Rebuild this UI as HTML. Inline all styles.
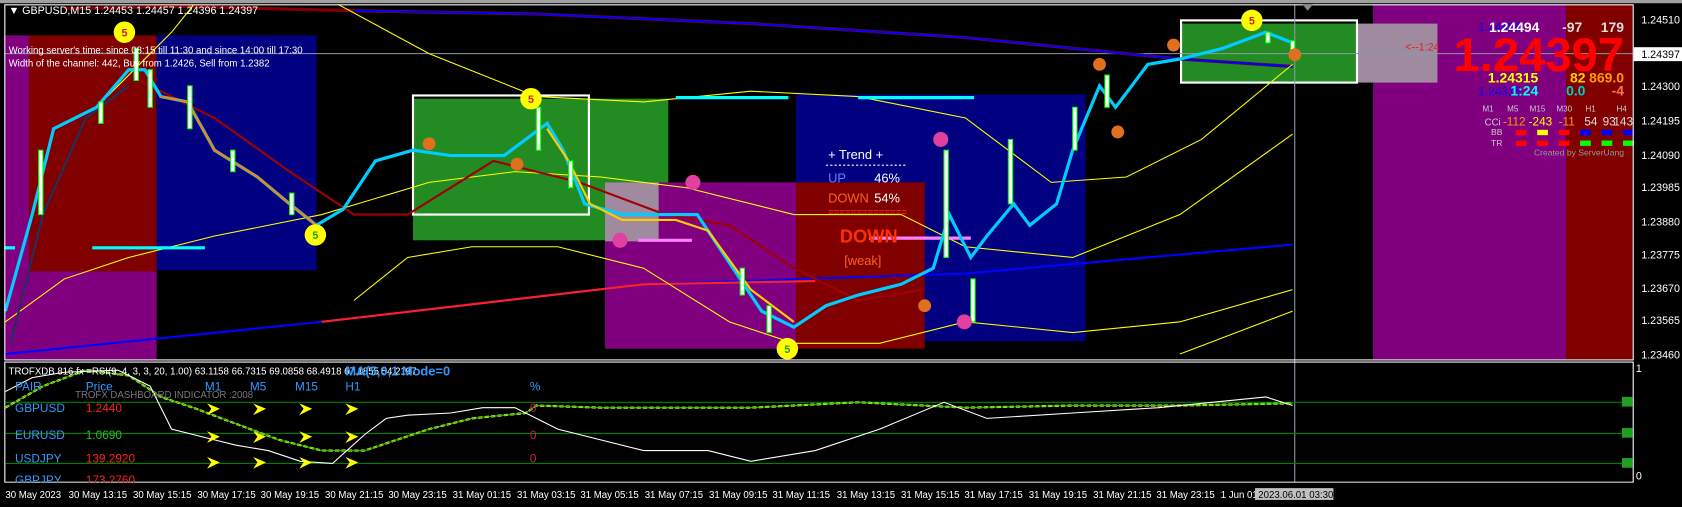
<!DOCTYPE html>
<html><head><meta charset="utf-8"><style>
body{margin:0;background:#000;width:1682px;height:507px;overflow:hidden;font-family:"Liberation Sans",sans-serif}
svg{display:block}
text{font-family:"Liberation Sans",sans-serif}
</style></head><body>
<svg width="1682" height="507" viewBox="0 0 1568 472.6" preserveAspectRatio="none" xmlns="http://www.w3.org/2000/svg">
<rect width="1568" height="473" fill="#000"/>
<rect x="0" y="0" width="1568" height="3" fill="#a0a0a0"/>
<rect x="4" y="33" width="23" height="302" fill="#800080"/>
<rect x="27" y="33" width="119" height="220" fill="#800000"/>
<rect x="27" y="253" width="119" height="82" fill="#800080"/>
<rect x="146" y="33" width="149" height="219" fill="#000080"/>
<rect x="385" y="92" width="238" height="132" fill="#228b22"/>
<rect x="742" y="88" width="270" height="230" fill="#000080"/>
<rect x="564" y="170" width="178" height="155" fill="#800080"/>
<rect x="742" y="170" width="120" height="155" fill="#800000"/>
<rect x="564" y="170" width="50" height="55" fill="#a08aa0"/>
<rect x="1280" y="4" width="180" height="331" fill="#800080"/>
<rect x="1460" y="4" width="62" height="331" fill="#800000"/>
<rect x="1100" y="22" width="165" height="55" fill="#228b22"/>
<rect x="1265" y="22" width="75" height="55" fill="#a08aa0"/>
<rect x="385" y="89" width="164" height="111" fill="none" stroke="#fff" stroke-width="2"/>
<rect x="1101" y="19" width="164" height="58" fill="none" stroke="#fff" stroke-width="2"/>
<line x1="4" y1="50" x2="1522" y2="50" stroke="#8a9aa8" stroke-width="1"/>
<line x1="1207" y1="4" x2="1207" y2="450" stroke="#8a9aa8" stroke-width="1"/>
<polyline points="60,8 170,6 330,10 500,13 700,22 900,35 1100,55 1205,62" fill="none" stroke="#800000" stroke-width="3"/>
<polyline points="330,10 500,13 700,22 900,35 1100,55 1205,62" fill="none" stroke="#0000ff" stroke-width="2"/>
<polyline points="5,330 300,300 600,265 900,255 1205,228" fill="none" stroke="#0000ff" stroke-width="2"/>
<polyline points="300,300 600,265 760,262" fill="none" stroke="#ff2020" stroke-width="2"/>
<polyline points="100,90 160,30 180,5" fill="none" stroke="#ffff00" stroke-width="1"/>
<polyline points="315,4 400,50 500,90 600,95 700,85 800,90 900,110 980,170 1050,165 1120,130 1205,60" fill="none" stroke="#ffff00" stroke-width="1"/>
<polyline points="5,300 60,260 120,240 200,220 300,200 400,170 480,160 560,165 640,175 740,200 840,200 900,230 1000,240 1100,200 1205,125" fill="none" stroke="#ffff00" stroke-width="1"/>
<polyline points="330,280 380,240 440,230 520,230 600,250 680,300 740,320 820,320 900,300 1000,310 1100,300 1205,270" fill="none" stroke="#ffff00" stroke-width="1"/>
<polyline points="1100,330 1205,290" fill="none" stroke="#ffff00" stroke-width="1"/>
<polyline points="130,75 200,110 270,160 330,200 380,200 460,150 540,170 620,200 680,210 740,250 800,280 860,270" fill="none" stroke="#a00000" stroke-width="2"/>
<polyline points="10,320 40,200 80,110 120,80" fill="none" stroke="#203060" stroke-width="2"/>
<line x1="86" y1="231" x2="191" y2="231" stroke="#00ffff" stroke-width="3"/>
<line x1="630" y1="91" x2="735" y2="91" stroke="#00ffff" stroke-width="3"/>
<line x1="800" y1="91" x2="908" y2="91" stroke="#00ffff" stroke-width="3"/>
<line x1="4" y1="231" x2="14" y2="231" stroke="#00ffff" stroke-width="3"/>
<line x1="810" y1="222" x2="905" y2="222" stroke="#ff80ff" stroke-width="3"/>
<line x1="595" y1="224" x2="645" y2="224" stroke="#ff80ff" stroke-width="3"/>
<polyline points="5,290 30,200 50,120 90,100 120,65 135,65 150,90 175,95 200,140 240,165 270,190 295,210 320,195 350,150 385,140 420,145 470,145 510,115 525,140 545,190 580,200 620,200 650,200 680,245 710,290 740,305 770,285 800,275 840,265 870,250 885,200 905,240 920,220 945,190 960,210 985,190 1000,140 1025,80 1040,100 1070,60 1100,55 1140,45 1180,30 1205,40" fill="none" stroke="#00ccff" stroke-width="3"/>
<polyline points="150,90 175,95 200,140 240,165 270,190 295,210" fill="none" stroke="#ff8000" stroke-width="2"/>
<polyline points="510,120 530,150 550,190 580,205 630,205 660,215 700,270 740,300" fill="none" stroke="#ffcc00" stroke-width="2"/>
<g fill="#fff" stroke="#00ff00" stroke-width="1">
<rect x="36" y="140" width="4" height="60"/><rect x="92" y="95" width="4" height="20"/><rect x="125" y="45" width="4" height="30"/><rect x="138" y="65" width="4" height="35"/>
<rect x="175" y="80" width="4" height="40"/><rect x="215" y="140" width="4" height="20"/><rect x="270" y="180" width="4" height="20"/>
<rect x="500" y="100" width="4" height="40"/><rect x="530" y="150" width="4" height="25"/><rect x="690" y="250" width="4" height="25"/><rect x="715" y="285" width="4" height="25"/>
<rect x="880" y="140" width="4" height="100"/><rect x="905" y="260" width="4" height="40"/><rect x="940" y="130" width="4" height="60"/><rect x="1000" y="100" width="4" height="40"/><rect x="1030" y="70" width="4" height="30"/><rect x="1180" y="30" width="4" height="10"/><rect x="1203" y="38" width="4" height="12"/>
</g>
<g font-size="10" font-weight="bold" text-anchor="middle">
<circle cx="116" cy="30" r="10" fill="#ffff00"/><text x="116" y="34" fill="#d02020">5</text>
<circle cx="495" cy="92" r="10" fill="#ffff00"/><text x="495" y="96" fill="#d02020">5</text>
<circle cx="1167" cy="19" r="10" fill="#ffff00"/><text x="1167" y="23" fill="#d02020">5</text>
<circle cx="294" cy="219" r="10" fill="#ffff00"/><text x="294" y="223" fill="#20a020">5</text>
<circle cx="734" cy="325" r="10" fill="#ffff00"/><text x="734" y="329" fill="#20a020">5</text>
<circle cx="400" cy="134" r="6" fill="#e07020"/><circle cx="482" cy="153" r="6" fill="#e07020"/><circle cx="1025" cy="60" r="6" fill="#e07020"/><circle cx="1094" cy="42" r="6" fill="#e07020"/><circle cx="1207" cy="51" r="6" fill="#e07020"/><circle cx="1042" cy="123" r="6" fill="#e07020"/><circle cx="862" cy="285" r="6" fill="#e07020"/>
<circle cx="877" cy="130" r="7" fill="#e040a0"/><circle cx="578" cy="224" r="7" fill="#e040a0"/><circle cx="646" cy="170" r="7" fill="#e040a0"/><circle cx="899" cy="300" r="7" fill="#e040a0"/>
</g>
<text x="8" y="13" font-size="10" fill="#fff">▼ GBPUSD,M15  1.24453 1.24457 1.24396 1.24397</text>
<text x="8" y="50" font-size="9" fill="#fff">Working server's time: since 08:15 till 11:30 and since 14:00 till 17:30</text>
<text x="8" y="62" font-size="9" fill="#fff">Width of the channel: 442, Buy from 1.2426, Sell from 1.2382</text>
<text x="772" y="148" font-size="12" fill="#fff">+  Trend  +</text>
<line x1="770" y1="154" x2="845" y2="154" stroke="#fff" stroke-dasharray="2,2"/>
<text x="772" y="170" font-size="12" fill="#6080ff">UP</text><text x="815" y="170" font-size="12" fill="#fff">46%</text>
<text x="772" y="189" font-size="12" fill="#ff6020">DOWN</text><text x="815" y="189" font-size="12" fill="#fff">54%</text>
<text x="772" y="201" font-size="9" fill="#ff4020">==============</text>
<text x="783" y="226" font-size="17" font-weight="bold" fill="#ff3000">DOWN</text>
<text x="787" y="247" font-size="12" fill="#ff6020">[weak]</text>
<text x="1418" y="29" font-size="11" fill="#0000ff" text-anchor="end">1.24494</text>
<text x="1418" y="89" font-size="11" fill="#0000ff" text-anchor="end">1.24315</text>
<text x="1310" y="47" font-size="10" fill="#e02020">&lt;--1:24</text>
<text x="1435" y="30" font-size="13" font-weight="bold" fill="#fff" text-anchor="end">1.24494</text>
<text x="1475" y="30" font-size="13" font-weight="bold" fill="#ddd" text-anchor="end">-97</text>
<text x="1514" y="30" font-size="13" font-weight="bold" fill="#ddd" text-anchor="end">179</text>
<text x="1514" y="66" font-size="44" font-weight="bold" fill="#ff0000" text-anchor="end">1.24397</text>
<text x="1434" y="77" font-size="13" font-weight="bold" fill="#ffff00" text-anchor="end">1.24315</text>
<text x="1478" y="77" font-size="13" font-weight="bold" fill="#ffcc00" text-anchor="end">82</text>
<text x="1514" y="77" font-size="13" font-weight="bold" fill="#ff9900" text-anchor="end">869.0</text>
<text x="1434" y="89" font-size="13" font-weight="bold" fill="#00ffff" text-anchor="end">1:24</text>
<text x="1478" y="89" font-size="13" font-weight="bold" fill="#00cccc" text-anchor="end">0.0</text>
<text x="1514" y="89" font-size="13" font-weight="bold" fill="#ff7060" text-anchor="end">-4</text>
<g font-size="7.5" fill="#ccc"><text x="1382" y="104">M1</text><text x="1405" y="104">M5</text><text x="1426" y="104">M15</text><text x="1451" y="104">M30</text><text x="1478" y="104">H1</text><text x="1507" y="104">H4</text></g>
<text x="1384" y="117" font-size="9" fill="#ccc">CCi</text>
<text x="1401" y="117" font-size="11" fill="#ff9900">-112</text><text x="1425" y="117" font-size="11" fill="#ffff00">-243</text><text x="1453" y="117" font-size="11" fill="#ff9900">-11</text><text x="1477" y="117" font-size="11" fill="#ddd">54</text><text x="1494" y="117" font-size="11" fill="#ddd">93</text><text x="1504" y="117" font-size="11" fill="#ddd">143</text>
<text x="1390" y="126" font-size="8" fill="#ccc">BB</text><text x="1390" y="136" font-size="8" fill="#ccc">TR</text>
<g><rect x="1413" y="121" width="10" height="5" fill="#f00"/><rect x="1433" y="121" width="10" height="5" fill="#ff0"/><rect x="1453" y="121" width="10" height="5" fill="#f00"/><rect x="1473" y="121" width="10" height="5" fill="#00f"/><rect x="1493" y="121" width="10" height="5" fill="#00f"/><rect x="1513" y="121" width="10" height="5" fill="#00f"/>
<rect x="1413" y="131" width="10" height="5" fill="#f00"/><rect x="1433" y="131" width="10" height="5" fill="#f00"/><rect x="1453" y="131" width="10" height="5" fill="#f00"/><rect x="1473" y="131" width="10" height="5" fill="#0f0"/><rect x="1493" y="131" width="10" height="5" fill="#0f0"/><rect x="1513" y="131" width="10" height="5" fill="#0f0"/></g>
<text x="1514" y="145" font-size="8" fill="#999" text-anchor="end" font-family="Liberation Mono">Created by ServerUang</text>
<rect x="4.5" y="4.5" width="1518" height="331" fill="none" stroke="#fff"/>
<rect x="4.5" y="337.5" width="1518" height="112" fill="none" stroke="#fff"/>
<path d="M1214 4 L1224 4 L1219 10 Z" fill="#888"/>
<g font-size="10" fill="#fff">
<text x="1530" y="22">1.24510</text><text x="1530" y="84">1.24300</text><text x="1530" y="116">1.24195</text><text x="1530" y="148">1.24090</text><text x="1530" y="178">1.23985</text><text x="1530" y="210">1.23880</text><text x="1530" y="241">1.23775</text><text x="1530" y="272">1.23670</text><text x="1530" y="302">1.23565</text><text x="1530" y="334">1.23460</text>
<text x="1525" y="347">1</text><text x="1525" y="447">0</text>
</g>
<rect x="1523" y="44" width="45" height="13" fill="#fff"/><text x="1530" y="54" font-size="10" fill="#000">1.24397</text>
<g stroke="#008000"><line x1="5" y1="375" x2="1522" y2="375"/><line x1="5" y1="404" x2="1522" y2="404"/><line x1="5" y1="432" x2="1522" y2="432"/></g>
<polyline points="5,380 40,360 80,345 120,350 150,370 180,380 220,395 260,410 300,420 340,420 400,400 440,390 490,385 500,378 560,380 620,380 700,380 800,375 900,380 1000,378 1100,378 1205,376" fill="none" stroke="#ffff00" stroke-width="2" stroke-dasharray="4,2"/>
<polyline points="5,380 40,360 80,345 120,350 150,370 180,380 220,395 260,410 300,420 340,420 400,400 440,390 490,385 500,378 560,380 620,380 700,380 800,375 900,380 1000,378 1100,378 1205,376" fill="none" stroke="#20c020" stroke-width="1"/>
<polyline points="5,365 30,352 60,347 110,345 140,360 160,400 200,410 220,415 250,420 280,430 310,432 340,405 360,390 380,387 420,385 450,380 480,380 500,390 520,400 560,410 600,420 660,420 700,430 760,420 820,400 880,375 920,390 1000,385 1080,380 1180,370 1205,378" fill="none" stroke="#fff" stroke-width="1"/>
<text x="70" y="371" font-size="9" fill="#777">TROFX DASHBOARD INDICATOR :2008</text>
<text x="8" y="349" font-size="9" fill="#fff">TROFXDB 816 fx =RSI(9, 4, 3, 3, 20, 1.00) 63.1158 66.7315 69.0858 68.4918 67.1855 54.2197</text>
<text x="322" y="350" font-size="12" font-weight="bold" fill="#3399ff">MA(5,0,1 Mode=0</text>
<g font-size="11" fill="#3399ff">
<text x="14" y="364">PAIR</text><text x="80" y="364">Price</text><text x="191" y="364">M1</text><text x="233" y="364">M5</text><text x="275" y="364">M15</text><text x="322" y="364">H1</text><text x="494" y="364">%</text>
<text x="14" y="384">GBPUSD</text><text x="14" y="409">EURUSD</text><text x="14" y="431">USDJPY</text><text x="14" y="451">GBPJPY</text>
</g>
<g font-size="11"><text x="80" y="384" fill="#ff2020">1.2440</text><text x="80" y="409" fill="#20c020">1.0690</text><text x="80" y="431" fill="#ff2020">139.2920</text><text x="80" y="451" fill="#ff2020">173.2760</text>
<text x="494" y="384" fill="#d02040">0</text><text x="494" y="409" fill="#d02040">0</text><text x="494" y="431" fill="#d02040">0</text></g>
<g fill="#ffff00">
<path d="M193 376 l12 5 l-12 6 l4 -6z"/><path d="M236 376 l12 5 l-12 6 l4 -6z"/><path d="M279 376 l12 5 l-12 6 l4 -6z"/><path d="M322 376 l12 5 l-12 6 l4 -6z"/>
<path d="M193 402 l12 5 l-12 6 l4 -6z"/><path d="M236 402 l12 5 l-12 6 l4 -6z"/><path d="M279 402 l12 5 l-12 6 l4 -6z"/><path d="M322 402 l12 5 l-12 6 l4 -6z"/>
<path d="M193 426 l12 5 l-12 6 l4 -6z"/><path d="M236 426 l12 5 l-12 6 l4 -6z"/><path d="M279 426 l12 5 l-12 6 l4 -6z"/><path d="M322 426 l12 5 l-12 6 l4 -6z"/>
</g>
<rect x="1512" y="370" width="10" height="9" fill="#20a020"/><rect x="1512" y="399" width="10" height="9" fill="#20a020"/><rect x="1512" y="427" width="10" height="9" fill="#20a020"/>
<rect x="0" y="450" width="1568" height="23" fill="#000"/>
<g font-size="9" fill="#fff">
<text x="5" y="464">30 May 2023</text><text x="64" y="464">30 May 13:15</text><text x="124" y="464">30 May 15:15</text><text x="184" y="464">30 May 17:15</text><text x="243" y="464">30 May 19:15</text><text x="303" y="464">30 May 21:15</text><text x="362" y="464">30 May 23:15</text><text x="422" y="464">31 May 01:15</text><text x="482" y="464">31 May 03:15</text><text x="541" y="464">31 May 05:15</text><text x="601" y="464">31 May 07:15</text><text x="661" y="464">31 May 09:15</text><text x="720" y="464">31 May 11:15</text><text x="780" y="464">31 May 13:15</text><text x="840" y="464">31 May 15:15</text><text x="899" y="464">31 May 17:15</text><text x="959" y="464">31 May 19:15</text><text x="1019" y="464">31 May 21:15</text><text x="1078" y="464">31 May 23:15</text><text x="1138" y="464">1 Jun 01</text>
</g>
<rect x="1170" y="455" width="73" height="11" fill="#c0c0c0"/><text x="1173" y="464" font-size="9" fill="#000">2023.06.01 03:30</text>
</svg>
</body></html>
